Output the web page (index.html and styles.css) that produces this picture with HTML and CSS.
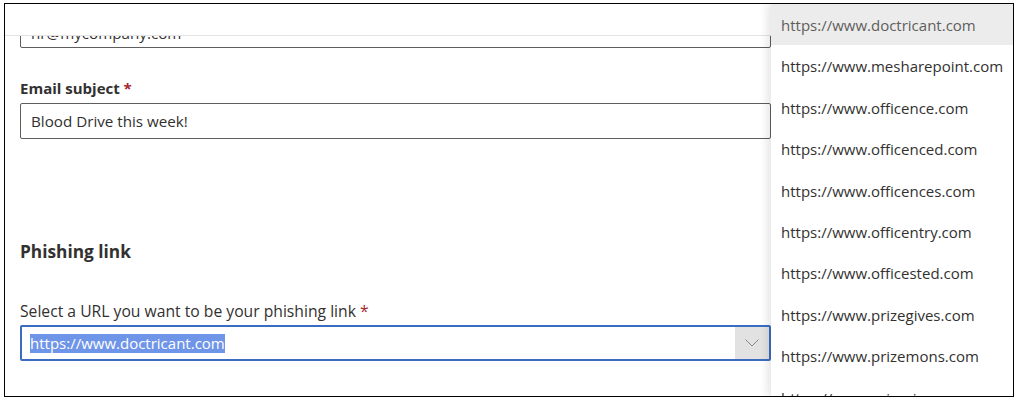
FILE: index.html
```html
<!DOCTYPE html>
<html lang="en">
<head>
<meta charset="utf-8">
<title>Phishing link</title>
<link rel="stylesheet" href="styles.css">
</head>
<body>
<div class="frame">
  <div class="header"></div>
  <div class="scroll">
    <div class="content">
      <div class="field first">
        <div class="input clipped">hr@mycompany.com</div>
      </div>
      <div class="field">
        <label class="label bold">Email subject <span class="req">*</span></label>
        <div class="input">Blood Drive this week!</div>
      </div>
      <h2 class="section">Phishing link</h2>
      <div class="field">
        <label class="label">Select a URL you want to be your phishing link <span class="req">*</span></label>
        <div class="dropdown">
          <div class="dd-value"><span class="sel">https://www.doctricant.com</span></div>
          <div class="dd-caret">
            <svg width="14" height="8" viewBox="0 0 14 8"><path d="M0.5 0.5 L7 7 L13.5 0.5" fill="none" stroke="#8a8886" stroke-width="1"/></svg>
          </div>
        </div>
      </div>
    </div>
  </div>
  <ul class="menu">
    <li class="item active">https://www.doctricant.com</li>
    <li class="item">https://www.mesharepoint.com</li>
    <li class="item">https://www.officence.com</li>
    <li class="item">https://www.officenced.com</li>
    <li class="item">https://www.officences.com</li>
    <li class="item">https://www.officentry.com</li>
    <li class="item">https://www.officested.com</li>
    <li class="item">https://www.prizegives.com</li>
    <li class="item">https://www.prizemons.com</li>
    <li class="item">https://www.prizesinc.com</li>
  </ul>
</div>
</body>
</html>
```
FILE: styles.css
```css
html, body {
  margin: 0;
  padding: 0;
  background: #ffffff;
}
body {
  font-family: "Open Sans", "Noto Sans", "DejaVu Sans", sans-serif;
  color: #323130;
}
.frame {
  margin: 3px 0 0 4px;
  width: 1010px;
  height: 394px;
  border: 1px solid #000000;
  box-sizing: border-box;
  position: relative;
  overflow: hidden;
  display: flex;
  flex-direction: column;
}
.header {
  height: 31px;
  flex: none;
  border-bottom: 1px solid #e3e3e3;
}
.scroll {
  flex: 1;
  overflow: hidden;
  padding-left: 15px;
}
.content {
  margin-top: -24px;
  width: 751px;
  display: flex;
  flex-direction: column;
}
.field + .field {
  margin-top: 25px;
}
.label {
  display: block;
  font-size: 15.7px;
  line-height: 20px;
  padding: 6px 0 4px 0;
}
.label.bold {
  font-size: 15px;
  font-weight: 700;
  line-height: 18px;
  padding: 6px 0 6px 0;
}
.req {
  color: #a4262c;
}
.input {
  height: 36px;
  box-sizing: border-box;
  border: 1px solid #605e5c;
  border-radius: 2px;
  padding: 0 10px;
  font-size: 15.2px;
  line-height: 34px;
  white-space: nowrap;
  overflow: hidden;
}
.input.clipped {
  line-height: 40px;
}
.section {
  margin: 101px 0 6px 0;
  font-size: 17.3px;
  line-height: 24px;
  font-weight: 700;
}
.section + .field {
  margin-top: 25px;
}
.dropdown {
  height: 36px;
  box-sizing: border-box;
  border: 2px solid #3a6dc2;
  border-radius: 2px;
  display: flex;
  align-items: stretch;
}
.dd-value {
  flex: 1;
  padding-left: 8px;
  display: flex;
  align-items: center;
  font-size: 15px;
}
.sel {
  background: #6f95e9;
  color: #ffffff;
  line-height: 19px;
}
.dd-caret {
  width: 34px;
  background: #e2e2e2;
  display: flex;
  align-items: center;
  justify-content: center;
}
.menu {
  position: absolute;
  left: 766px;
  top: 0;
  bottom: 0;
  width: 242px;
  margin: 0;
  padding: 0;
  list-style: none;
  background: #ffffff;
  box-shadow: -4px 0 8px rgba(0, 0, 0, 0.10);
}
.item {
  height: 41.4px;
  line-height: 43px;
  padding-left: 10px;
  font-size: 15px;
  color: #323130;
  white-space: nowrap;
}
.item.active {
  background: #ececec;
  color: #605e5c;
}
```
